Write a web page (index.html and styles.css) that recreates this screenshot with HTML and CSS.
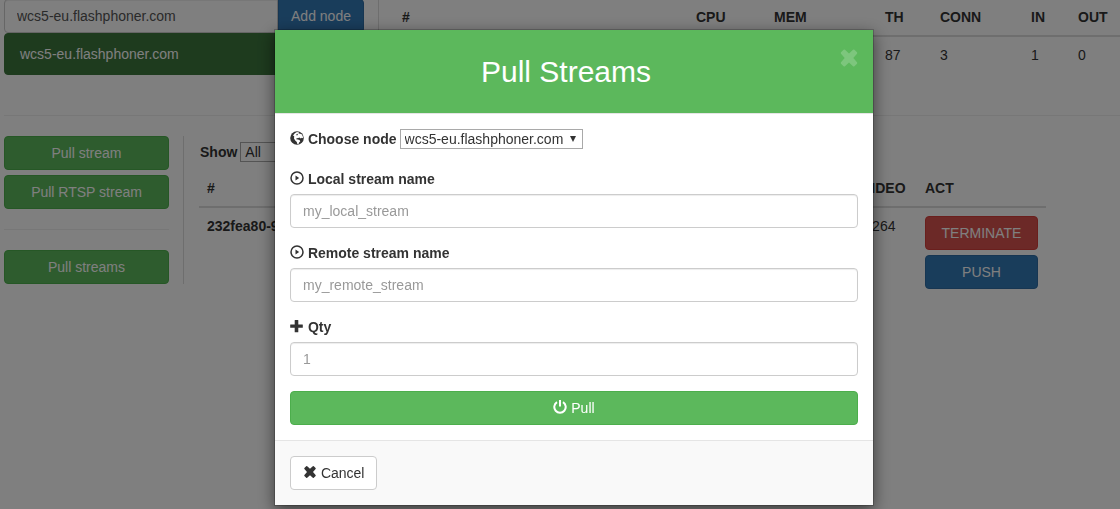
FILE: index.html
```
<!DOCTYPE html>
<html lang="en">
<head>
<meta charset="utf-8">
<title>Pull Streams</title>
<link rel="stylesheet" href="styles.css">
</head>
<body>

<div class="page">
    <div class="topRow">
        <div class="nodes">
            <div class="inputGroup">
                <input class="formControl" type="text" aria-label="Node address" value="wcs5-eu.flashphoner.com">
                <button class="btn btnPrimary" type="button">Add node</button>
            </div>
            <a class="nodeItem" href="#">wcs5-eu.flashphoner.com</a>
        </div>
        <div class="nodeStats">
            <table class="table statsTable">
                <colgroup>
                    <col class="colNode"><col class="colCpu"><col class="colMem"><col class="colTh"><col class="colConn"><col class="colIn"><col>
                </colgroup>
                <thead>
                    <tr><th>#</th><th>CPU</th><th>MEM</th><th>TH</th><th>CONN</th><th>IN</th><th>OUT</th></tr>
                </thead>
                <tbody>
                    <tr><td></td><td></td><td></td><td>87</td><td>3</td><td>1</td><td>0</td></tr>
                </tbody>
            </table>
        </div>
    </div>

    <hr>

    <div class="streamRow">
        <div class="actions">
            <button class="btn btnSuccess" type="button">Pull stream</button>
            <button class="btn btnSuccess" type="button">Pull RTSP stream</button>
            <hr>
            <button class="btn btnSuccess" type="button">Pull streams</button>
        </div>
        <div class="streams">
            <div class="filter">
                <label for="show">Show</label>
                <span class="selectWrap">
                    <select id="show"><option>All</option></select>
                </span>
            </div>
            <table class="table streamTable">
                <colgroup>
                    <col><col class="colVideo"><col class="colAct">
                </colgroup>
                <thead>
                    <tr><th>#</th><th>VIDEO</th><th>ACT</th></tr>
                </thead>
                <tbody>
                    <tr>
                        <th scope="row">232fea80-9</th>
                        <td>H264</td>
                        <td>
                            <div class="rowButtons">
                                <button class="btn btnDanger" type="button">TERMINATE</button>
                                <button class="btn btnPrimary" type="button">PUSH</button>
                            </div>
                        </td>
                    </tr>
                </tbody>
            </table>
        </div>
    </div>
</div>

<div class="backdrop">
    <div class="modal" role="dialog" aria-labelledby="modalTitle">
        <div class="modalHeader">
            <h4 id="modalTitle">Pull Streams</h4>
            <button class="close" type="button" aria-label="Close">
                <svg viewBox="0 0 14 14"><path d="M4.200 1.200 7 3.800l2.800-2.600q.5-.4 1 0l1.800 1.800q.4.500 0 1L10 7l2.600 3q.4.500 0 1l-1.800 1.800q-.5.4-1 0L7 10.200l-2.800 2.600q-.5.4-1 0L1.400 11q-.4-.5 0-1L4 7 1.400 4q-.4-.5 0-1l1.800-1.800q.5-.4 1 0z"/></svg>
            </button>
        </div>

        <form class="modalBody">
            <div class="nodeChoice">
                <label for="node">
                    <svg class="icon" viewBox="0 0 14 14"><circle cx="7" cy="7" r="6.800"/><path class="land" d="M6.400 1.200 8.800 1l-.4 1.300 1.500.4 1.500.3 1.300 2 .4 2.300-1.300-.6-1 .7-1.300-1-1.200.6-1.700.2-.4 1 1.600.4 1.700.4.800 1.300-1.200 1.200-.3 1.300-1.500.3-.5-2.200-1.600-1.300L4 7.400l.2-2.200L3 4.500l1.600-2z"/><path d="M6.300 3.200 7.600 2.800 7.900 4l-1.200.6z"/></svg>
                    Choose node
                </label>
                <span class="selectWrap">
                    <select id="node"><option>wcs5-eu.flashphoner.com</option></select>
                </span>
            </div>

            <div class="formGroup">
                <label for="localName">
                    <svg class="icon" viewBox="0 0 14 14"><circle class="ring" cx="7" cy="7" r="6"/><path d="M5.500 4.500 9.200 7 5.500 9.500z"/></svg>
                    Local stream name
                </label>
                <input class="formControl" id="localName" type="text" placeholder="my_local_stream">
            </div>

            <div class="formGroup">
                <label for="remoteName">
                    <svg class="icon" viewBox="0 0 14 14"><circle class="ring" cx="7" cy="7" r="6"/><path d="M5.500 4.500 9.200 7 5.500 9.500z"/></svg>
                    Remote stream name
                </label>
                <input class="formControl" id="remoteName" type="text" placeholder="my_remote_stream">
            </div>

            <div class="formGroup">
                <label for="qty">
                    <svg class="icon" viewBox="0 0 14 14"><path d="M5 1h3q.3 0 .3.300V5.500h4.200q.3 0 .3.300v2.600q0 .3-.3.300H8.300V13q0 .3-.3.300H5q-.3 0-.3-.3V8.700H.5q-.3 0-.3-.3V5.800q0-.3.3-.3h4.200V1.300Q4.700 1 5 1z"/></svg>
                    Qty
                </label>
                <input class="formControl" id="qty" type="text" placeholder="1">
            </div>

            <button class="btn btnSuccess" type="button">
                <svg class="icon" viewBox="0 0 14 14"><path class="arc" d="M4 2.200a5.700 5.700 0 1 0 6 0"/><path d="M6 0h2v6.500H6z"/></svg>
                Pull
            </button>
        </form>

        <div class="modalFooter">
            <button class="btn btnDefault" type="button">
                <svg class="icon" viewBox="0 0 14 14"><path d="M4.200 1.200 7 3.800l2.800-2.600q.5-.4 1 0l1.800 1.800q.4.500 0 1L10 7l2.600 3q.4.500 0 1l-1.800 1.800q-.5.4-1 0L7 10.200l-2.800 2.600q-.5.4-1 0L1.400 11q-.4-.5 0-1L4 7 1.400 4q-.4-.5 0-1l1.800-1.800q.5-.4 1 0z"/></svg>
                Cancel
            </button>
        </div>
    </div>
</div>

</body>
</html>
```

FILE: styles.css
```
*{
    box-sizing:border-box;
}
body{
    margin:0;
    font-family:"Liberation Sans", Arial, sans-serif;
    font-size:14px;
    line-height:20px;
    color:#333;
    background:#fff;
    overflow:hidden;
}
button, input, select{
    font-family:inherit;
    font-size:14px;
}
label{
    font-weight:bold;
}
hr{
    width:100%;
    margin:20px 0;
    border:0;
    border-top:1px solid #eee;
}

/* page behind the dialog */
.page{
    margin-top:-1px;
    padding-left:4px;
}
.topRow{
    display:flex;
    height:96px;
}
.nodes{
    flex:none;
    width:375px;
    padding-right:14px;
    border-right:1px solid #ddd;
}
.inputGroup{
    display:flex;
}
.inputGroup .formControl{
    flex:1;
    min-width:0;
    border-radius:4px 0 0 4px;
}
.inputGroup .btn{
    width:86px;
    border-radius:0 4px 4px 0;
}
.nodeItem{
    display:block;
    padding:10px 15px;
    border:1px solid #3c763d;
    border-radius:4px;
    background:#3c763d;
    color:#fff;
    text-decoration:none;
}
.nodeStats{
    flex:1;
    padding-left:15px;
}
.table{
    width:100%;
    border-collapse:separate;
    border-spacing:0;
    table-layout:fixed;
}
.table th, .table td{
    padding:8px;
    text-align:left;
    vertical-align:top;
}
.table thead th{
    border-bottom:2px solid #ddd;
}
.colNode{ width:294px; }
.colCpu{ width:78px; }
.colMem{ width:111px; }
.colTh{ width:55px; }
.colConn{ width:91px; }
.colIn{ width:47px; }
.colVideo{ width:63px; }
.colAct{ width:129px; }

.streamRow{
    display:flex;
    align-items:flex-start;
}
.actions{
    flex:none;
    display:flex;
    flex-direction:column;
    gap:5px;
    width:180px;
    padding-right:14px;
    border-right:1px solid #ddd;
}
.actions hr{
    margin:15px 0;
}
.streams{
    flex:1;
    padding-left:15px;
    padding-right:74px;
}
.filter{
    display:flex;
    gap:3px;
    padding:6px 0 8px 1px;
}
.filter select{
    width:60px;
}
.rowButtons{
    display:flex;
    flex-direction:column;
    gap:5px;
}

/* controls */
.btn{
    height:34px;
    padding:6px 12px;
    border:1px solid transparent;
    border-radius:4px;
    line-height:20px;
    color:#fff;
    cursor:pointer;
}
.btnPrimary{
    background:#337ab7;
    border-color:#2e6da4;
}
.btnSuccess{
    background:#5cb85c;
    border-color:#4cae4c;
}
.btnDanger{
    background:#d9534f;
    border-color:#d43f3a;
}
.btnDefault{
    background:#fff;
    border-color:#ccc;
    color:#333;
}
.formControl{
    display:block;
    width:100%;
    height:34px;
    padding:6px 12px;
    border:1px solid #ccc;
    border-radius:4px;
    background:#fff;
    color:#555;
    box-shadow:inset 0 1px 1px rgba(0,0,0,0.075);
}
.formControl::placeholder{
    color:#999;
}
.selectWrap{
    position:relative;
    display:inline-block;
    height:20px;
}
.selectWrap::after{
    content:"";
    position:absolute;
    top:7px;
    right:7px;
    border:3px solid transparent;
    border-top:6px solid #333;
    border-bottom:0;
    pointer-events:none;
}
select{
    appearance:none;
    display:block;
    height:20px;
    padding:0 18px 0 4px;
    border:1px solid #a9a9a9;
    border-radius:0;
    background:#fff;
    color:#333;
}
.icon{
    width:14px;
    height:14px;
    vertical-align:-1px;
    fill:currentColor;
}
.ring, .arc{
    fill:none;
    stroke:currentColor;
    stroke-width:1.5;
}
.arc{
    stroke-width:2;
}
.land{
    fill:#fff;
}

/* dialog */
.backdrop{
    position:fixed;
    inset:0;
    display:flex;
    justify-content:center;
    align-items:flex-start;
    padding:29px 0 0 28px;
    background:rgba(0,0,0,0.5);
}
.modal{
    width:600px;
    border:1px solid rgba(0,0,0,0.2);
    background:#fff;
    background-clip:padding-box;
    box-shadow:0 5px 15px rgba(0,0,0,0.5);
}
.modalHeader{
    position:relative;
    padding:20px 36px 20px 20px;
    border-bottom:1px solid #e5e5e5;
    background:#5cb85c;
    color:#fff;
    text-align:center;
}
.modalHeader h4{
    margin:0;
    font-size:30px;
    font-weight:normal;
    line-height:43px;
}
.close{
    position:absolute;
    top:18px;
    right:14px;
    width:20px;
    height:20px;
    padding:0;
    border:0;
    background:none;
    opacity:0.2;
    cursor:pointer;
}
.close svg{
    display:block;
    width:20px;
    height:20px;
    fill:#fff;
}
.modalBody{
    padding:15px;
}
.nodeChoice{
    display:flex;
    gap:3px;
    margin-bottom:20px;
}
.formGroup{
    margin-bottom:15px;
}
.formGroup label{
    display:block;
    margin-bottom:5px;
}
.modalBody > .btn{
    display:block;
    width:100%;
}
.modalFooter{
    padding:15px;
    border-top:1px solid #e5e5e5;
    background:#f9f9f9;
}
.modalFooter .btn{
    display:block;
}
```
